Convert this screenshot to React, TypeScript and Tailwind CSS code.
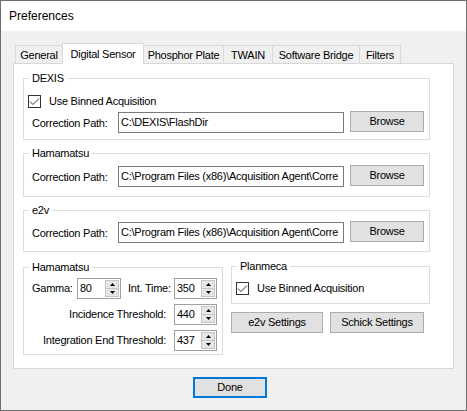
const FONT = "font-['Liberation_Sans',Arial,sans-serif]";

function Check({ label }: { label: string }) {
  return (
    <div className="flex items-center h-[13px]">
      <span className="w-[13px] h-[13px] border border-[#333333] bg-white flex items-center justify-center">
        <svg width="11" height="11" viewBox="0 0 11 11">
          <path d="M1 5.5 L4 8.5 L10 2.5" stroke="#333333" strokeWidth="1" fill="none" />
        </svg>
      </span>
      <span className="ml-[8px]">{label}</span>
    </div>
  );
}

function Group({
  title,
  className,
  children,
}: {
  title: string;
  className?: string;
  children: React.ReactNode;
}) {
  return (
    <fieldset className={"border border-[#dcdcdc] " + (className ?? "")}>
      <legend className="ml-[5px] px-[3px] leading-[13px]">{title}</legend>
      {children}
    </fieldset>
  );
}

function Btn({ label, className }: { label: string; className?: string }) {
  return (
    <div
      className={
        "h-[21px] border border-[#adadad] bg-[#e1e1e1] flex items-center justify-center font-normal " +
        (className ?? "")
      }
    >
      {label}
    </div>
  );
}

function PathRow({ value, className }: { value: string; className?: string }) {
  return (
    <div className={"flex items-start h-[22px] pl-[8px] " + (className ?? "")}>
      <span className="w-[86px] self-center pt-[2px]">Correction Path:</span>
      <div className="mt-px w-[226px] h-[21px] border border-[#7a7a7a] bg-white pl-[2px] flex items-center overflow-hidden whitespace-nowrap">
        {value}
      </div>
      <Btn label="Browse" className="ml-[6px] w-[74px]" />
    </div>
  );
}

function Spinner({ value, className }: { value: string; className?: string }) {
  return (
    <div
      className={
        "h-[21px] border border-[#a0a0a0] bg-white flex " + (className ?? "w-[43px]")
      }
    >
      <span className="flex-1 pl-[2px] flex items-center">{value}</span>
      <div className="w-[14px] my-px mr-px flex flex-col">
        <span className="flex-1 bg-[#e6e6e6] border border-[#c4c4c4] flex items-center justify-center">
          <svg width="5" height="3" viewBox="0 0 5 3">
            <path d="M0 3 L2.5 0 L5 3 Z" fill="#000" />
          </svg>
        </span>
        <span className="flex-1 bg-[#e6e6e6] border border-[#c4c4c4] border-t-0 flex items-center justify-center">
          <svg width="5" height="3" viewBox="0 0 5 3">
            <path d="M0 0 L2.5 3 L5 0 Z" fill="#000" />
          </svg>
        </span>
      </div>
    </div>
  );
}

const tabs = [
  { label: "General", w: "w-[48px]" },
  { label: "Digital Sensor", w: "w-[82px]", active: true },
  { label: "Phosphor Plate", w: "w-[81px]" },
  { label: "TWAIN", w: "w-[50px]" },
  { label: "Software Bridge", w: "w-[88px]" },
  { label: "Filters", w: "w-[42px]" },
];

export default function App() {
  return (
    <div
      className={`w-[467px] h-[411px] border border-[#6e6e6e] bg-[#f0f0f0] text-[11px] leading-[13px] tracking-[-0.25px] text-black flex flex-col ${FONT}`}
    >
      <div className="h-[30px] shrink-0 bg-white flex items-center pl-[8px] text-[12px] tracking-normal">
        Preferences
      </div>

      <div className="h-[32px] shrink-0 pt-[12px] pl-[14px] flex items-end">
        {tabs.map((t, i) =>
          t.active ? (
            <div
              key={t.label}
              className={`${t.w} h-[21px] -mb-px -ml-px relative z-10 border border-b-0 border-[#d9d9d9] bg-white flex items-center justify-center whitespace-nowrap`}
            >
              {t.label}
            </div>
          ) : (
            <div
              key={t.label}
              className={`${t.w} h-[18px] ${i > 0 ? "-ml-px" : ""} border border-b-0 border-[#d9d9d9] bg-[#f0f0f0] flex items-center justify-center pt-[1px] whitespace-nowrap`}
            >
              {t.label}
            </div>
          )
        )}
      </div>

      <div className="ml-[12px] w-[441px] h-[306px] shrink-0 border border-[#d9d9d9] bg-white pt-[8px] pl-[9px] pr-[23px]">
        <Group title="DEXIS">
          <div className="pl-[4px] mt-[10px]">
            <Check label="Use Binned Acquisition" />
          </div>
          <PathRow value={"C:\\DEXIS\\FlashDir"} className="mt-[3px] mb-[6px]" />
        </Group>

        <Group title="Hamamatsu" className="mt-[7px]">
          <PathRow
            value={"C:\\Program Files (x86)\\Acquisition Agent\\Corre"}
            className="mt-[5px] mb-[9px]"
          />
        </Group>

        <Group title="e2v" className="mt-[7px]">
          <PathRow
            value={"C:\\Program Files (x86)\\Acquisition Agent\\Corre"}
            className="mt-[4px] mb-[8px]"
          />
        </Group>

        <div className="mt-[9px] flex gap-[8px] items-start">
          <Group title="Hamamatsu" className="w-[200px]">
            <div className="mt-[4px] h-[21px] flex items-center pl-[8px]">
              <span className="w-[45px]">Gamma:</span>
              <Spinner value="80" className="w-[44px]" />
              <span className="ml-[7px] w-[46px]">Int. Time:</span>
              <Spinner value="350" />
            </div>
            <div className="mt-[5px] h-[21px] flex items-center justify-end pr-[5px]">
              <span className="mr-[8px]">Incidence Threshold:</span>
              <Spinner value="440" />
            </div>
            <div className="mt-[5px] mb-[3px] h-[21px] flex items-center justify-end pr-[5px]">
              <span className="mr-[8px]">Integration End Threshold:</span>
              <Spinner value="437" />
            </div>
          </Group>

          <div className="w-[199px] -mt-px">
            <Group title="Planmeca">
              <div className="pl-[4px] mt-[9px] mb-[8px]">
                <Check label="Use Binned Acquisition" />
              </div>
            </Group>
            <div className="mt-[8px] flex gap-[7px]">
              <Btn label="e2v Settings" className="w-[92px]" />
              <Btn label="Schick Settings" className="w-[94px]" />
            </div>
          </div>
        </div>
      </div>

      <div className="mt-[8px] ml-[192px] flex">
        <div className="w-[74px] h-[21px] border-2 border-[#0078d7] bg-[#e1e1e1] flex items-center justify-center">
          Done
        </div>
      </div>
    </div>
  );
}
